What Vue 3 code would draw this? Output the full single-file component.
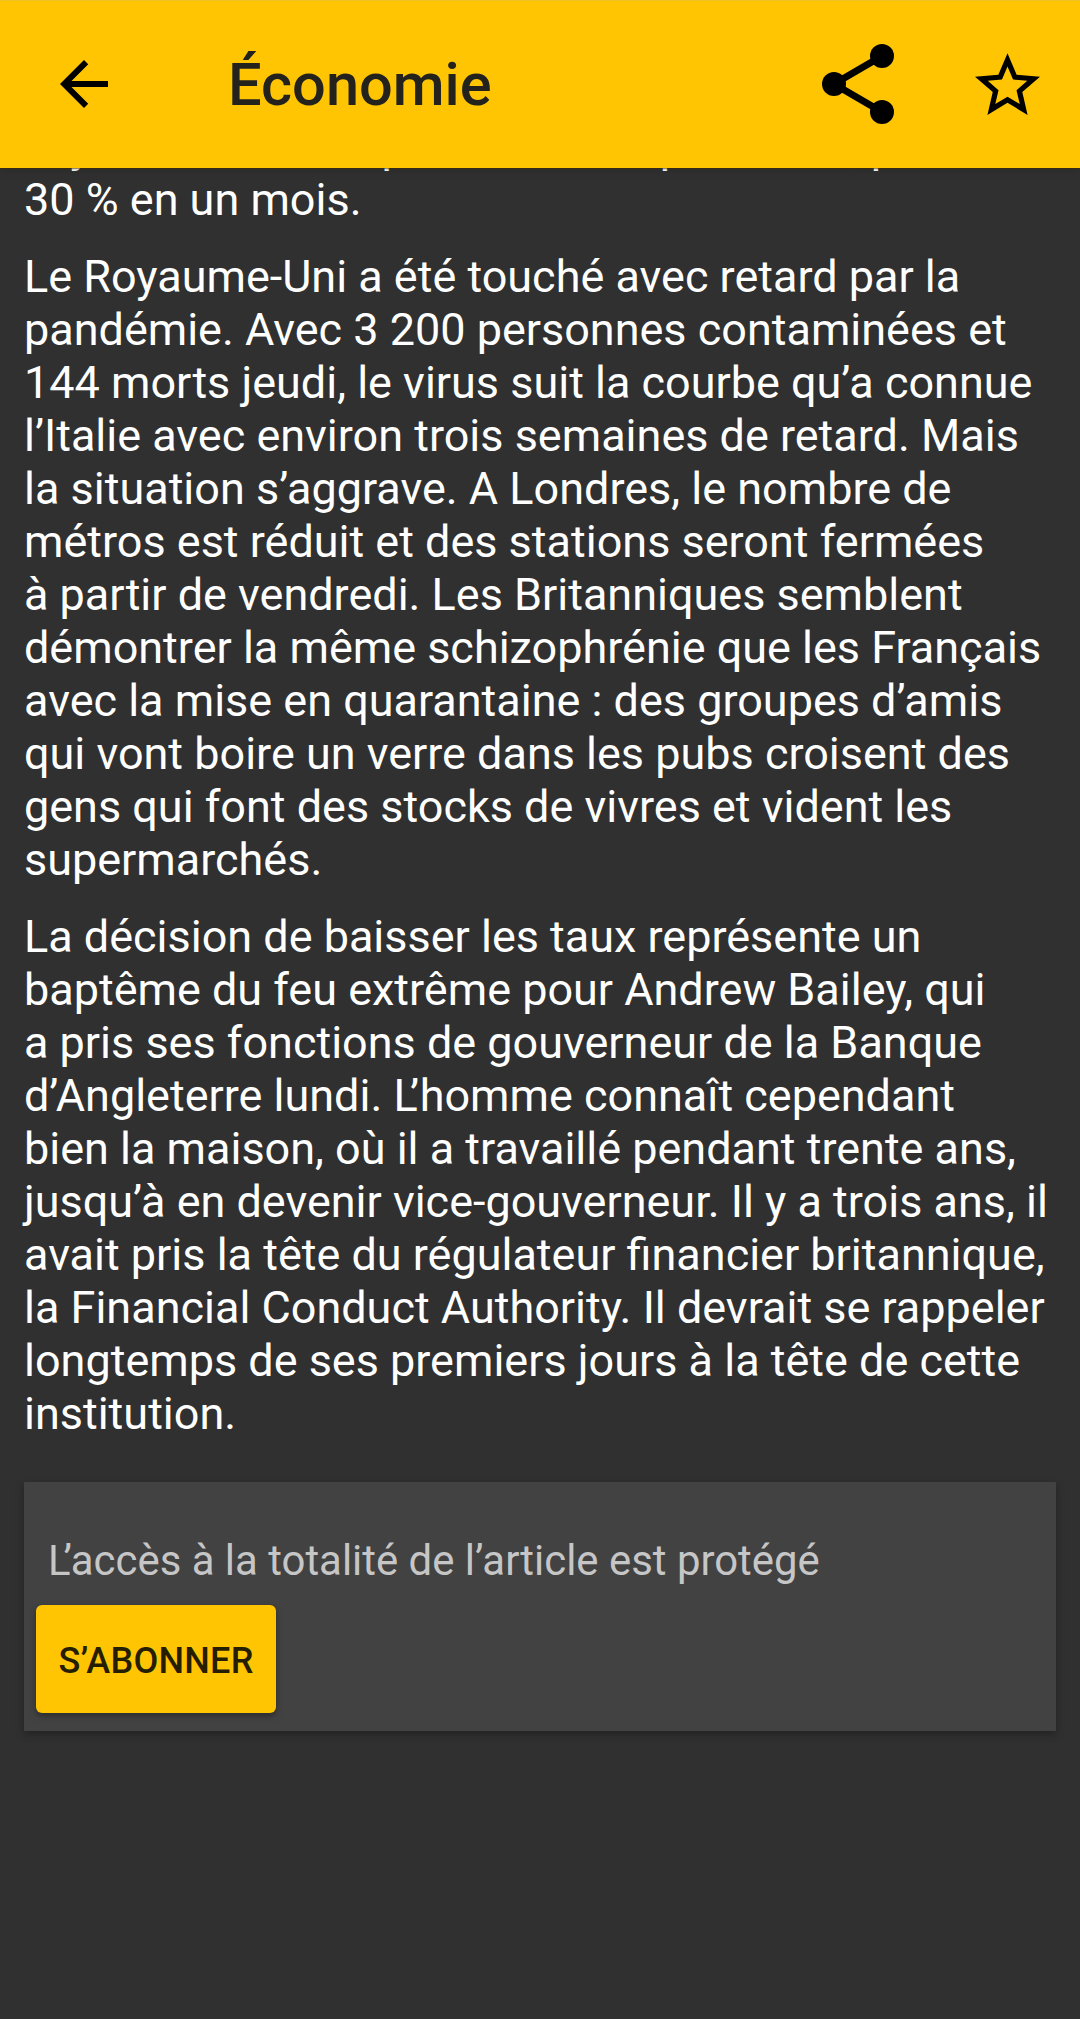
<script setup>
const paragraphs = [
  [
    'déjà tombée à un plus bas taux pour tous, plus de',
    '30 % en un mois.',
  ],
  [
    'Le Royaume-Uni a été touché avec retard par la',
    'pandémie. Avec 3 200 personnes contaminées et',
    '144 morts jeudi, le virus suit la courbe qu’a connue',
    'l’Italie avec environ trois semaines de retard. Mais',
    'la situation s’aggrave. A Londres, le nombre de',
    'métros est réduit et des stations seront fermées',
    'à partir de vendredi. Les Britanniques semblent',
    'démontrer la même schizophrénie que les Français',
    'avec la mise en quarantaine : des groupes d’amis',
    'qui vont boire un verre dans les pubs croisent des',
    'gens qui font des stocks de vivres et vident les',
    'supermarchés.',
  ],
  [
    'La décision de baisser les taux représente un',
    'baptême du feu extrême pour Andrew Bailey, qui',
    'a pris ses fonctions de gouverneur de la Banque',
    'd’Angleterre lundi. L’homme connaît cependant',
    'bien la maison, où il a travaillé pendant trente ans,',
    'jusqu’à en devenir vice-gouverneur. Il y a trois ans, il',
    'avait pris la tête du régulateur financier britannique,',
    'la Financial Conduct Authority. Il devrait se rappeler',
    'longtemps de ses premiers jours à la tête de cette',
    'institution.',
  ],
]

// Splits a line so that the L before an apostrophe can be kerned.
const pieces = (line) => line.split(/(L)(?=’)/)
</script>

<template>
  <div class="screen">
    <header class="bar">
      <svg class="back" viewBox="4 4 16 16"><path d="M20 11H7.83l5.59-5.59L12 4l-8 8 8 8 1.41-1.41L7.83 13H20v-2z" /></svg>
      <h1>Économie</h1>
      <svg class="share" viewBox="0 0 72 80">
        <path d="M60 12 12 40 60 68" fill="none" stroke="#000" stroke-width="7" />
        <circle cx="12" cy="40" r="12" /><circle cx="60" cy="12" r="12" /><circle cx="60" cy="68" r="12" />
      </svg>
      <svg class="star" viewBox="2 2 20 19"><path d="M22 9.24l-7.19-.62L12 2 9.19 8.63 2 9.24l5.46 4.73L5.82 21 12 17.27 18.18 21l-1.63-7.03L22 9.24zM12 15.4l-3.76 2.27 1-4.28-3.32-2.88 4.38-.38L12 6.1l1.71 4.04 4.38.38-3.32 2.88 1 4.28L12 15.4z" /></svg>
    </header>
    <main class="article">
      <p v-for="(lines, i) in paragraphs" :key="i">
        <span v-for="line in lines" :key="line" class="line"><span v-for="(piece, n) in pieces(line)" :key="n" :class="{ kern: piece === 'L' }">{{ piece }}</span></span>
      </p>
      <section class="paywall">
        <div class="notice"><span class="kern">L</span>’accès à la totalité de l’article est protégé</div>
        <button>S’ABONNER</button>
      </section>
    </main>
  </div>
</template>

<style>
body { margin: 0; background: #303030; }
</style>

<style scoped>
.screen {
  width: 1080px;
  height: 2019px;
  overflow: hidden;
  background: #303030;
  font-family: Roboto, sans-serif;
  color: #fff;
}
.bar {
  position: relative;
  z-index: 1;
  height: 168px;
  box-sizing: border-box;
  display: flex;
  align-items: center;
  padding: 0 40px 0 60px;
  background: #ffc502;
  box-shadow: inset 0 1px 0 #f0c228, 0 1px 1px rgba(66, 40, 0, .5), 0 2px 10px rgba(0, 0, 0, .15);
}
.back { width: 48px; height: 48px; }
h1 {
  flex: 1;
  margin: 3px 0 0 120px;
  font-size: 59.5px;
  line-height: 71px;
  font-weight: 500;
  color: #24221c;
}
.share { width: 72px; height: 80px; }
.star { width: 65px; height: 62px; margin-left: 81px; }
.article { margin-top: -48px; padding: 0 24px; }
p { margin: 0 0 24px; font-size: 44.97px; }
.line { display: block; height: 53px; line-height: 53px; white-space: nowrap; }
p:first-child .line:first-child { word-spacing: .5px; }
.kern { letter-spacing: -.17em; }
.paywall {
  box-sizing: border-box;
  height: 249px;
  margin-top: 42px;
  padding: 54px 12px 0;
  background: #424242;
  box-shadow: 0 3px 8px rgba(0, 0, 0, .3);
}
.notice { padding-left: 12px; font-size: 41.9px; line-height: 50px; color: #c6c6c6; white-space: nowrap; }
button {
  display: block;
  width: 240px;
  height: 108px;
  margin-top: 19px;
  padding: 4px 0 0;
  border: 0;
  border-radius: 6px;
  background: #ffc502;
  box-shadow: 0 3px 6px rgba(0, 0, 0, .35);
  font: 500 36px/104px Roboto, sans-serif;
  letter-spacing: .25px;
  color: #261e00;
}
</style>
